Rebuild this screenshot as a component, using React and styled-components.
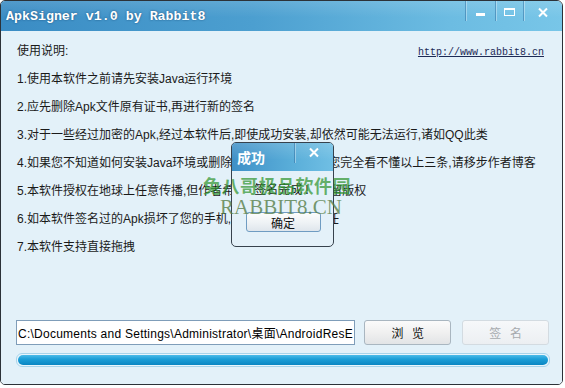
import React from "react";
import styled, { createGlobalStyle } from "styled-components";

const Global = createGlobalStyle`
  html, body { margin: 0; padding: 0; background: #ffffff; }
  body { font-family: "Liberation Sans", "Noto Sans CJK SC", sans-serif; }
`;

const Window = styled.div`
  width: 563px;
  height: 385px;
  box-sizing: border-box;
  border: 1px solid #2c3238;
  border-radius: 5px 6px 5px 5px;
  overflow: hidden;
  display: flex;
  flex-direction: column;
`;

const TitleBar = styled.div`
  height: 30px;
  flex: none;
  display: flex;
  align-items: flex-start;
  justify-content: space-between;
  background: linear-gradient(180deg, rgba(255,255,255,0.12) 0%, rgba(255,255,255,0) 55%),
    linear-gradient(90deg, #3a8cc4 0%, #4c9fd0 45%, #6cbce2 80%, #78c6e8 100%);
`;

const Title = styled.div`
  padding: 8px 0 0 5px;
  font-family: "Liberation Mono", monospace;
  font-weight: bold;
  font-size: 13.3px;
  line-height: 16px;
  color: #ffffff;
  text-shadow: 0 0 2px rgba(10, 50, 90, 0.7);
  white-space: pre;
`;

const Controls = styled.div`
  display: flex;
  height: 20px;
`;

const CtrlBtn = styled.div`
  width: ${(p) => p.$w}px;
  height: 20px;
  display: flex;
  align-items: center;
  justify-content: center;
  border-left: 1px solid rgba(40, 100, 150, 0.45);
  box-shadow: inset 1px 0 0 rgba(255, 255, 255, 0.35);
`;

const Body = styled.div`
  position: relative;
  flex: 1;
  background: #e3f1f9;
  padding: 6px 13px 17px 15px;
  display: flex;
  flex-direction: column;
`;

const HeaderRow = styled.div`
  display: flex;
  justify-content: space-between;
  align-items: center;
  height: 28px;
`;

const Line = styled.div`
  height: 28px;
  line-height: 28px;
  font-size: 12px;
  color: #1a1a1a;
  white-space: nowrap;
  padding-left: 1px;
`;

const Link = styled.a`
  font-family: "Liberation Mono", monospace;
  font-size: 10px;
  color: #1c2a55;
  text-decoration: underline;
  margin-right: 5px;
  margin-top: 2px;
`;

const Bottom = styled.div`
  margin-top: auto;
  display: flex;
  flex-direction: column;
  gap: 8px;
`;

const Row = styled.div`
  display: flex;
  align-items: center;
  height: 25px;
`;

const PathInput = styled.input`
  box-sizing: border-box;
  width: 340px;
  height: 25px;
  border: 1px solid #7f9db9;
  background: #ffffff;
  padding: 0 1px;
  font-family: "Liberation Sans", "Noto Sans CJK SC", sans-serif;
  font-size: 12px;
  letter-spacing: 0.25px;
  color: #000;
  outline: none;
`;

const Button = styled.button`
  box-sizing: border-box;
  width: 87px;
  height: 25px;
  margin-left: ${(p) => p.$gap}px;
  border-radius: 3px;
  border: 1px solid ${(p) => (p.disabled ? "#d3dbe1" : "#a9b6c0")};
  background: ${(p) =>
    p.disabled
      ? "linear-gradient(180deg, #f6f8fa 0%, #eceff2 100%)"
      : "linear-gradient(180deg, #fbfbfb 0%, #f0f0f0 50%, #e2e4e6 100%)"};
  color: ${(p) => (p.disabled ? "#a6aaae" : "#111")};
  font-family: "Noto Sans CJK SC", sans-serif;
  font-size: 12px;
  letter-spacing: 3px;
  text-indent: 3px;
  padding: 0;
  white-space: pre;
`;

const Progress = styled.div`
  box-sizing: border-box;
  height: 14px;
  width: 534px;
  border: 1px solid #a9d4ea;
  border-radius: 6px;
  background: #e8f5fc;
  padding: 1px;
`;

const ProgressFill = styled.div`
  height: 100%;
  border-radius: 5px;
  background: linear-gradient(180deg, #4dbbe8 0%, #1c9fd8 40%, #0a86c2 100%);
`;

const Dialog = styled.div`
  position: absolute;
  left: 230px;
  top: 111px;
  width: 103px;
  height: 105px;
  box-sizing: border-box;
  border: 1px solid #37424d;
  border-radius: 5px;
  overflow: hidden;
  background: #e4f1f9;
  display: flex;
  flex-direction: column;
  z-index: 2;
`;

const DialogTitle = styled.div`
  height: 28px;
  flex: none;
  display: flex;
  align-items: flex-start;
  justify-content: space-between;
  background: linear-gradient(180deg, rgba(255,255,255,0.15) 0%, rgba(255,255,255,0) 60%),
    linear-gradient(90deg, #3f90c7 0%, #5aaed9 60%, #70bfe4 100%);
`;

const DialogTitleText = styled.div`
  padding: 5px 0 0 5px;
  font-family: "Noto Sans CJK SC", sans-serif;
  font-weight: bold;
  font-size: 14px;
  line-height: 18px;
  color: #fff;
`;

const DialogClose = styled.div`
  width: 38px;
  height: 20px;
  display: flex;
  align-items: center;
  justify-content: center;
  border-left: 1px solid rgba(40, 100, 150, 0.45);
  box-shadow: inset 1px 0 0 rgba(255, 255, 255, 0.35);
`;

const DialogBody = styled.div`
  flex: 1;
  display: flex;
  flex-direction: column;
  align-items: center;
  padding-top: 10px;
`;

const DialogMsg = styled.div`
  font-family: "Noto Sans CJK SC", sans-serif;
  font-size: 12px;
  line-height: 16px;
  color: #111;
  white-space: pre;
  margin-left: -2px;
`;

const OkButton = styled.button`
  box-sizing: border-box;
  width: 75px;
  height: 20px;
  margin-top: 15px;
  margin-left: 1px;
  border-radius: 3px;
  border: 1px solid #6f9cc2;
  background: linear-gradient(180deg, #fdfdfd 0%, #eef2f5 55%, #dfe6ec 100%);
  font-family: "Noto Sans CJK SC", sans-serif;
  font-size: 12px;
  color: #111;
  padding: 0;
`;

const WatermarkCn = styled.div`
  position: absolute;
  left: 202px;
  top: 143px;
  font-family: "Noto Sans CJK SC", sans-serif;
  font-weight: bold;
  font-size: 18px;
  letter-spacing: 0.5px;
  line-height: 22px;
  color: rgba(50, 150, 50, 0.72);
  white-space: nowrap;
  z-index: 3;
  pointer-events: none;
`;

const WatermarkEn = styled.div`
  position: absolute;
  left: 219px;
  top: 164px;
  font-family: "Liberation Serif", serif;
  font-size: 21px;
  line-height: 24px;
  color: rgba(85, 125, 70, 0.78);
  white-space: nowrap;
  z-index: 3;
  pointer-events: none;
`;

const lines = [
  "1.使用本软件之前请先安装Java运行环境",
  "2.应先删除Apk文件原有证书,再进行新的签名",
  "3.对于一些经过加密的Apk,经过本软件后,即使成功安装,却依然可能无法运行,诸如QQ此类",
  "4.如果您不知道如何安装Java环境或删除Apk证书,或者如果您完全看不懂以上三条,请移步作者博客",
  "5.本软件授权在地球上任意传播,但作者希望您能在传播时保留版权",
  "6.如本软件签名过的Apk损坏了您的手机,作者不承担任何责任",
  "7.本软件支持直接拖拽",
];

export default function App() {
  return (
    <>
      <Global />
      <Window>
        <TitleBar>
          <Title>ApkSigner v1.0 by Rabbit8</Title>
          <Controls>
            <CtrlBtn $w={29}>
              <svg width="10" height="20" viewBox="0 0 10 20">
                <rect x="0" y="12" width="9" height="3" fill="#fff" />
              </svg>
            </CtrlBtn>
            <CtrlBtn $w={27}>
              <svg width="11" height="20" viewBox="0 0 11 20">
                <rect x="0.5" y="7.5" width="10" height="7" fill="none" stroke="#fff" />
                <rect x="0.5" y="7.5" width="10" height="1.5" fill="#fff" />
              </svg>
            </CtrlBtn>
            <CtrlBtn $w={38}>
              <svg width="10" height="20" viewBox="0 0 10 20">
                <path d="M1 7.5 L9 15.5 M9 7.5 L1 15.5" stroke="#fff" strokeWidth="2" />
              </svg>
            </CtrlBtn>
          </Controls>
        </TitleBar>
        <Body>
          <HeaderRow>
            <Line>使用说明:</Line>
            <Link href="#">http://www.rabbit8.cn</Link>
          </HeaderRow>
          {lines.map((t) => (
            <Line key={t}>{t}</Line>
          ))}
          <Bottom>
            <Row>
              <PathInput
                readOnly
                defaultValue={"C:\\Documents and Settings\\Administrator\\桌面\\AndroidResEdit.apk"}
              />
              <Button $gap={9}>浏 览</Button>
              <Button $gap={11} disabled>
                签 名
              </Button>
            </Row>
            <Progress>
              <ProgressFill style={{ width: "100%" }} />
            </Progress>
          </Bottom>

          <Dialog>
            <DialogTitle>
              <DialogTitleText>成功</DialogTitleText>
              <DialogClose>
                <svg width="10" height="20" viewBox="0 0 10 20">
                  <path d="M1 5.5 L9 13.5 M9 5.5 L1 13.5" stroke="#fff" strokeWidth="2" />
                </svg>
              </DialogClose>
            </DialogTitle>
            <DialogBody>
              <DialogMsg>签名完成 !</DialogMsg>
              <OkButton>确定</OkButton>
            </DialogBody>
          </Dialog>

          <WatermarkCn>兔八哥极品软件园</WatermarkCn>
          <WatermarkEn>RABBIT8.CN</WatermarkEn>
        </Body>
      </Window>
    </>
  );
}
